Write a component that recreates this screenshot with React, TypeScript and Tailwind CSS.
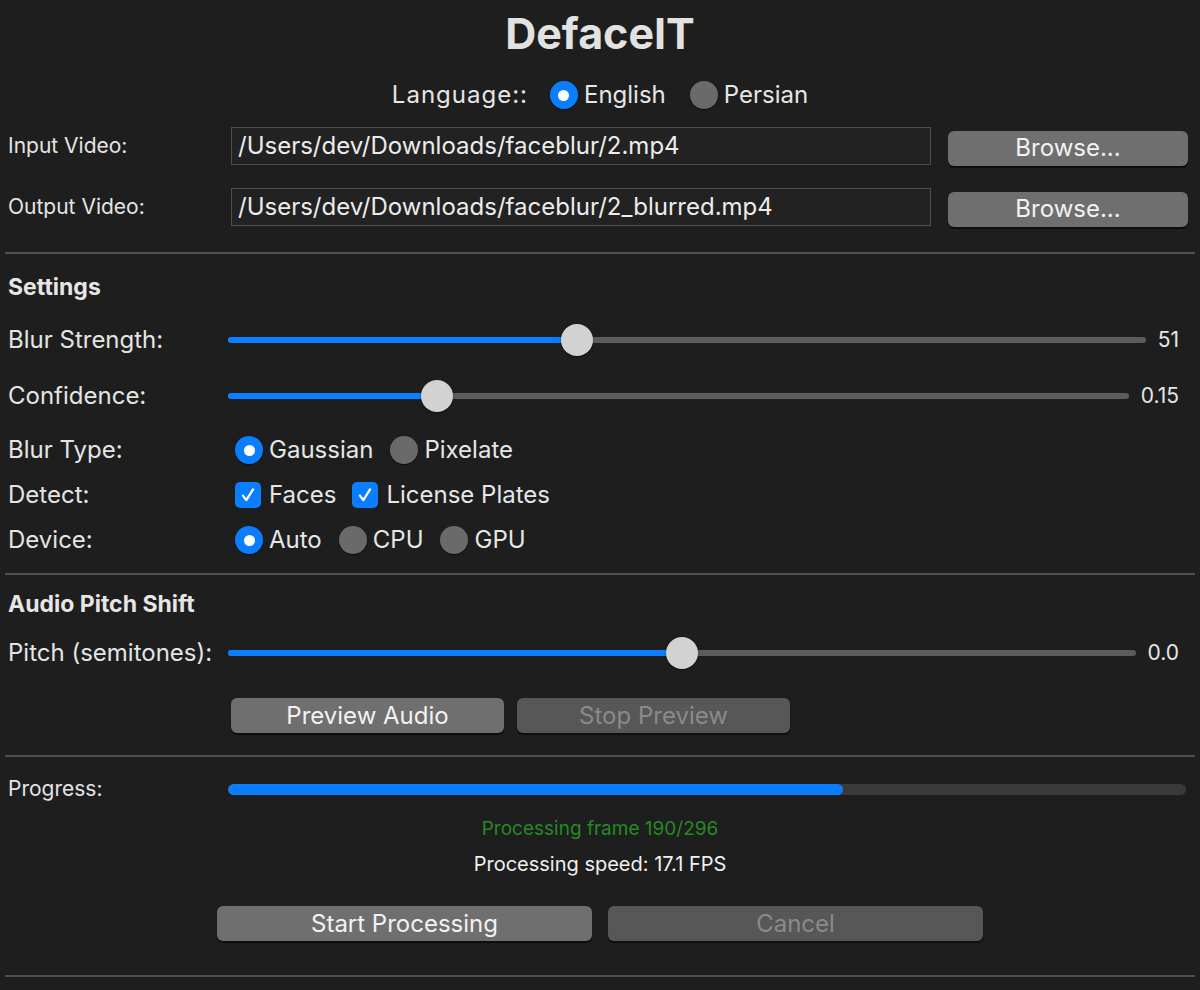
import React from "react";

const Divider = ({ className = "" }: { className?: string }) => (
  <div className={`mx-[5px] h-[2px] bg-[#505050] ${className}`} />
);

const Label = ({ children, className = "" }: { children: React.ReactNode; className?: string }) => (
  <div className={`w-[228px] shrink-0 pl-[8px] text-[#e4e4e4] ${className}`}>{children}</div>
);

const Radio = ({ checked, label }: { checked?: boolean; label: string }) => (
  <div className="flex items-center gap-[6px]">
    {checked ? (
      <span className="flex h-[28px] w-[28px] items-center justify-center rounded-full bg-[#0b7dff] shadow-[0_1px_1px_rgba(0,0,0,0.5)]">
        <span className="h-[11px] w-[11px] rounded-full bg-white" />
      </span>
    ) : (
      <span className="h-[28px] w-[28px] rounded-full bg-[#6a6a6a] shadow-[0_1px_1px_rgba(0,0,0,0.6)]" />
    )}
    <span className="text-[24px] text-[#e6e6e6]">{label}</span>
  </div>
);

const Check = ({ label }: { label: string }) => (
  <div className="flex items-center gap-[8px]">
    <span className="flex h-[26px] w-[26px] items-center justify-center rounded-[5px] bg-[#0b7dff]">
      <svg viewBox="0 0 16 16" className="h-[18px] w-[18px]" fill="none" stroke="white" strokeWidth="2" strokeLinecap="round" strokeLinejoin="round">
        <path d="M3.5 8.5 L6.5 12.5 L12.5 3" />
      </svg>
    </span>
    <span className="text-[24px] text-[#e6e6e6]">{label}</span>
  </div>
);

const Slider = ({ pct, value }: { pct: string; value: string }) => (
  <div className="flex flex-1 items-center gap-[12px] pr-[21px]">
    <div className="relative h-[32px] flex-1">
      <div className="absolute left-0 right-0 top-[13px] h-[6px] rounded-full bg-[#5c5c5c]" />
      <div className="absolute left-0 top-[13px] h-[6px] rounded-full bg-[#0b7dff]" style={{ width: pct }} />
      <div
        className="absolute top-0 h-[32px] w-[32px] -translate-x-1/2 rounded-full bg-[#d2d2d2] shadow-[0_1px_2px_rgba(0,0,0,0.5)]"
        style={{ left: pct }}
      />
    </div>
    <span className="text-[21px] text-[#e6e6e6]">{value}</span>
  </div>
);

const Button = ({ children, disabled, className = "" }: { children: React.ReactNode; disabled?: boolean; className?: string }) => (
  <div
    className={`flex h-[35px] items-center justify-center rounded-[6px] text-[24px] shadow-[0_2px_1px_rgba(0,0,0,0.55)] ${
      disabled ? "bg-[#575757] text-[#8a8a8a]" : "bg-[#6f6f6f] text-[#f2f2f2]"
    } ${className}`}
  >
    {children}
  </div>
);

const FileRow = ({ label, path, className = "" }: { label: string; path: string; className?: string }) => (
  <div className={`flex h-[44px] items-center ${className}`}>
    <Label className="text-[21px]">{label}</Label>
    <div className="ml-[3px] flex h-[38px] w-[700px] items-center border border-[#4e4e4e] bg-[#222222] px-[6px] text-[24px] text-[#ececec]">
      {path}
    </div>
    <Button className="ml-[17px] mt-[4px] w-[240px]">Browse...</Button>
  </div>
);

export default function App() {
  return (
    <div className="min-h-screen bg-[#1e1e1e] font-['Inter','Liberation_Sans',sans-serif] text-[#e6e6e6]">
      <h1 className="flex h-[66px] items-center justify-center text-[43px] font-bold text-[#e2e2e2]">DefaceIT</h1>

      <div className="flex h-[58px] items-center justify-center gap-[22px]">
        <span className="text-[24px] tracking-[1px]">Language::</span>
        <div className="flex items-center gap-[24px]">
          <Radio checked label="English" />
          <Radio label="Persian" />
        </div>
      </div>

      <FileRow label="Input Video:" path="/Users/dev/Downloads/faceblur/2.mp4" />
      <FileRow className="mt-[17px]" label="Output Video:" path="/Users/dev/Downloads/faceblur/2_blurred.mp4" />

      <Divider className="mt-[23px]" />

      <div className="mt-[18px] flex h-[30px] items-center pl-[8px] text-[23px] font-bold text-[#e6e6e6]">Settings</div>

      <div className="mt-[18px] flex h-[40px] items-center">
        <Label className="text-[24px]">Blur Strength:</Label>
        <Slider pct="38%" value="51" />
      </div>
      <div className="mt-[16px] flex h-[40px] items-center">
        <Label className="text-[24px]">Confidence:</Label>
        <Slider pct="23.2%" value="0.15" />
      </div>

      <div className="mt-[14px] flex h-[40px] items-center">
        <Label className="text-[24px]">Blur Type:</Label>
        <div className="ml-[7px] flex items-center gap-[17px]">
          <Radio checked label="Gaussian" />
          <Radio label="Pixelate" />
        </div>
      </div>
      <div className="mt-[5px] flex h-[40px] items-center">
        <Label className="text-[24px]">Detect:</Label>
        <div className="ml-[7px] flex items-center gap-[16px]">
          <Check label="Faces" />
          <Check label="License Plates" />
        </div>
      </div>
      <div className="mt-[5px] flex h-[40px] items-center">
        <Label className="text-[24px]">Device:</Label>
        <div className="ml-[7px] flex items-center gap-[17px]">
          <Radio checked label="Auto" />
          <Radio label="CPU" />
          <Radio label="GPU" />
        </div>
      </div>

      <Divider className="mt-[13px]" />

      <div className="mt-[14px] flex h-[30px] items-center pl-[8px] text-[23px] font-bold text-[#e6e6e6]">Audio Pitch Shift</div>

      <div className="mt-[14px] flex h-[40px] items-center">
        <Label className="text-[24px]">Pitch (semitones):</Label>
        <Slider pct="50%" value="0.0" />
      </div>

      <div className="mt-[25px] flex gap-[13px] pl-[231px]">
        <Button className="w-[273px]">Preview Audio</Button>
        <Button disabled className="w-[273px]">Stop Preview</Button>
      </div>

      <Divider className="mt-[22px]" />

      <div className="mt-[17px] flex h-[30px] items-center">
        <Label className="text-[21px]">Progress:</Label>
        <div className="mr-[14px] h-[11px] flex-1 overflow-hidden rounded-full bg-[#3a3a3a]">
          <div className="h-full rounded-full bg-[#0b7dff]" style={{ width: `${(190 / 296) * 100}%` }} />
        </div>
      </div>

      <div className="mt-[13px] flex h-[24px] items-center justify-center text-[19px] text-[#228b22]">
        Processing frame 190/296
      </div>
      <div className="mt-[11px] flex h-[24px] items-center justify-center text-[20px] text-[#f0f0f0]">
        Processing speed: 17.1 FPS
      </div>

      <div className="mt-[30px] flex justify-center gap-[16px]">
        <Button className="w-[375px]">Start Processing</Button>
        <Button disabled className="w-[375px]">Cancel</Button>
      </div>

      <Divider className="mt-[34px]" />
    </div>
  );
}
